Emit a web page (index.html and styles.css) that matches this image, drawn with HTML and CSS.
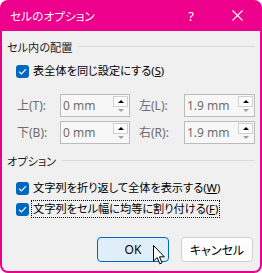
FILE: index.html
```html
<!DOCTYPE html>
<html lang="ja">
<head>
<meta charset="utf-8">
<link rel="stylesheet" href="styles.css">
</head>
<body>
<div class="window">
  <div class="titlebar">
    <span class="title">セルのオプション</span>
    <span class="tbtn help">?</span>
    <span class="tbtn close"><svg width="11" height="11" viewBox="0 0 11 11"><path d="M0.5 0.5 L10.5 10.5 M10.5 0.5 L0.5 10.5" stroke="#fff" stroke-width="1.1" fill="none"/></svg></span>
  </div>
  <div class="content">
    <div class="group">セル内の配置</div>
    <div class="cbrow first">
      <span class="cb"><svg width="9" height="7" viewBox="0 0 9 7"><path d="M1 3.6 L3.4 6 L8 1.2" stroke="#fff" stroke-width="1.2" fill="none"/></svg></span>
      <span class="cbtext">表全体を同じ設定にする(<u>S</u>)</span>
    </div>
    <div class="spins">
      <span class="lbl">上(T):</span>
      <div class="spin"><span class="val">0 mm</span><div class="arrows"><span class="up"></span><span class="dn"></span></div></div>
      <span class="lbl right">左(L):</span>
      <div class="spin"><span class="val">1.9 mm</span><div class="arrows"><span class="up"></span><span class="dn"></span></div></div>
      <span class="lbl">下(B):</span>
      <div class="spin"><span class="val">0 mm</span><div class="arrows"><span class="up"></span><span class="dn"></span></div></div>
      <span class="lbl right">右(R):</span>
      <div class="spin"><span class="val">1.9 mm</span><div class="arrows"><span class="up"></span><span class="dn"></span></div></div>
    </div>
    <div class="group g2">オプション</div>
    <div class="cbrow second">
      <span class="cb"><svg width="9" height="7" viewBox="0 0 9 7"><path d="M1 3.6 L3.4 6 L8 1.2" stroke="#fff" stroke-width="1.2" fill="none"/></svg></span>
      <span class="cbtext">文字列を折り返して全体を表示する(<u>W</u>)</span>
    </div>
    <div class="cbrow third">
      <span class="cb"><svg width="9" height="7" viewBox="0 0 9 7"><path d="M1 3.6 L3.4 6 L8 1.2" stroke="#fff" stroke-width="1.2" fill="none"/></svg></span>
      <span class="cbtext focus">文字列をセル幅に均等に割り付ける(<u>F</u>)</span>
    </div>
    <div class="buttons">
      <span class="btn ok">OK</span>
      <span class="btn">キャンセル</span>
    </div>
  </div>
  <svg class="cursor" width="13" height="20" viewBox="0 0 13 20"><path d="M0.5 0.5 L0.5 16 L4.2 12.6 L6.8 18.8 L9 17.8 L6.5 11.8 L11.3 11.8 Z" fill="#fff" stroke="#000" stroke-width="1" stroke-linejoin="round"/></svg>
</div>
</body>
</html>
```

FILE: styles.css
```css
html, body {
  margin: 0;
  padding: 0;
  background: #ffffff;
}
body {
  font-family: "Noto Sans", "Noto Sans CJK JP", sans-serif;
  font-size: 12px;
  color: #000;
  font-feature-settings: "palt";
}
.window {
  position: relative;
  width: 262px;
  height: 273px;
  box-sizing: border-box;
  background: #ec008c;
  border-radius: 8px;
  padding: 0 2px 2px 2px;
  display: flex;
  flex-direction: column;
}
.titlebar {
  height: 31px;
  display: flex;
  align-items: center;
  color: #fff;
  padding-left: 8px;
  flex-shrink: 0;
}
.title {
  font-size: 11.7px;
  flex: 1;
}
.tbtn {
  width: 46px;
  height: 31px;
  display: flex;
  align-items: center;
  justify-content: center;
}
.help {
  font-size: 13px;
  font-family: "Noto Sans", sans-serif;
}
.content {
  flex: 1;
  background: #f0f0f0;
  border-radius: 0 0 6px 6px;
  padding: 10px 5px 0 5px;
  display: flex;
  flex-direction: column;
}
.group {
  height: 14px;
  line-height: 14px;
  font-size: 11.2px;
  display: flex;
  align-items: center;
  color: #1a1a1a;
}
.group::after {
  content: "";
  flex: 1;
  height: 1px;
  background: #d9d9d9;
  margin-left: 6px;
  margin-bottom: 3px;
}
.g2 {
  margin-top: 11px;
}
.cbrow {
  display: flex;
  align-items: center;
  height: 18px;
  padding-left: 9px;
}
.cbrow.first {
  margin-top: 7px;
}
.cbrow.second {
  margin-top: 10px;
}
.cbrow.third {
  margin-top: 3px;
}
.cb {
  width: 13px;
  height: 13px;
  border-radius: 3px;
  background: #0067c0;
  display: flex;
  align-items: center;
  justify-content: center;
  flex-shrink: 0;
}
.cbtext {
  margin-left: 2px;
  padding: 0 1px;
  height: 16px;
  line-height: 16px;
  font-size: 11.2px;
  border: 1px solid transparent;
  white-space: nowrap;
}
.cbtext.focus {
  border: 1px dotted #000;
}
.spins {
  margin-top: 14px;
  padding-left: 10px;
  display: grid;
  grid-template-columns: 43px 70px 54px 71px;
  row-gap: 4px;
}
.lbl {
  color: #6d6d6d;
  line-height: 23px;
  white-space: nowrap;
}
.lbl.right {
  margin-left: 9px;
}
.spin {
  height: 23px;
  box-sizing: border-box;
  border: 1px solid #bcbcbc;
  background: #f7f7f7;
  display: flex;
  align-items: stretch;
}
.val {
  flex: 1;
  color: #6d6d6d;
  padding-left: 2px;
  line-height: 21px;
  font-size: 12px;
}
.arrows {
  width: 15px;
  display: flex;
  flex-direction: column;
  padding: 1px 1px 1px 0;
}
.arrows span {
  flex: 1;
  display: flex;
  align-items: center;
  justify-content: center;
}
.up {
  background: #fdfdfd;
  border: 1px solid #d0d0d0;
}
.up::before {
  content: "";
  border-left: 3px solid transparent;
  border-right: 3px solid transparent;
  border-bottom: 3px solid #000;
}
.dn::before {
  content: "";
  border-left: 3px solid transparent;
  border-right: 3px solid transparent;
  border-top: 3px solid #a0a0a0;
}
.buttons {
  margin-top: 19px;
  display: flex;
  justify-content: flex-end;
  gap: 12px;
  padding-right: 2px;
}
.btn {
  width: 72px;
  height: 25px;
  box-sizing: border-box;
  border: 1px solid #d0d0d0;
  border-radius: 4px;
  background: #fdfdfd;
  display: flex;
  align-items: center;
  justify-content: center;
}
.btn.ok {
  border-color: #0067c0;
  background: #e0eef9;
}
.cursor {
  position: absolute;
  left: 153px;
  top: 245px;
}
```
